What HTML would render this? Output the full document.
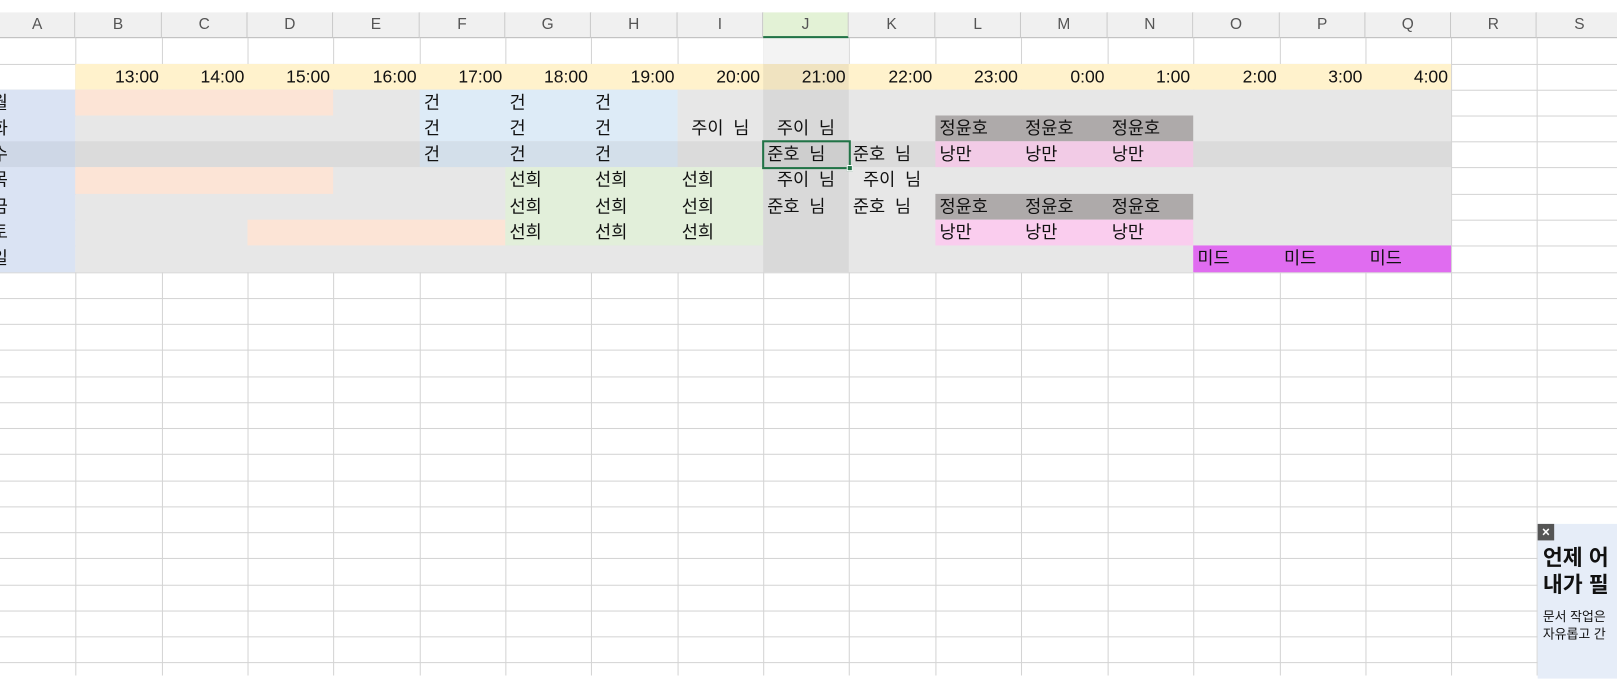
<!DOCTYPE html>
<html><head><meta charset="utf-8"><style>
*{margin:0;padding:0;box-sizing:border-box}
html,body{width:1617px;height:655px;overflow:hidden;background:#fff}
#w{position:absolute;left:0;top:0;width:1568px;height:636px;transform:scale(1.0313);transform-origin:0 0;font-family:"Liberation Sans","Noto Sans CJK KR",sans-serif;}
.a{position:absolute}
.vl{position:absolute;top:12px;width:1px;height:643px;background:#d4d4d4}
.hl{position:absolute;left:0;width:1617px;height:1px;background:#d4d4d4}
.hd{position:absolute;top:12px;height:25px;background:#f0f0f0;border-right:1px solid #c8c8c8;border-bottom:1px solid #bdbdbd;color:#555;font-size:15px;line-height:24px;text-align:center}
.t{position:absolute;font-size:17px;line-height:25px;color:#111;white-space:nowrap}
.r{text-align:right;padding-right:3px}
.c{text-align:center}
.l{padding-left:4px}
</style></head><body><div id="w">
<div class="hl" style="top:62px"></div>
<div class="hl" style="top:87px"></div>
<div class="hl" style="top:112px"></div><div class="hl" style="top:137px"></div><div class="hl" style="top:162px"></div><div class="hl" style="top:188px"></div><div class="hl" style="top:213px"></div><div class="hl" style="top:238px"></div><div class="hl" style="top:264px"></div>
<div class="hl" style="top:289px"></div><div class="hl" style="top:314px"></div><div class="hl" style="top:339px"></div><div class="hl" style="top:365px"></div><div class="hl" style="top:390px"></div><div class="hl" style="top:415px"></div><div class="hl" style="top:440px"></div><div class="hl" style="top:466px"></div><div class="hl" style="top:491px"></div><div class="hl" style="top:516px"></div><div class="hl" style="top:541px"></div><div class="hl" style="top:567px"></div><div class="hl" style="top:592px"></div><div class="hl" style="top:617px"></div><div class="hl" style="top:642px"></div>
<div class="vl" style="left:73px"></div><div class="vl" style="left:157px"></div><div class="vl" style="left:240px"></div><div class="vl" style="left:323px"></div><div class="vl" style="left:407px"></div><div class="vl" style="left:490px"></div><div class="vl" style="left:573px"></div><div class="vl" style="left:657px"></div><div class="vl" style="left:740px"></div><div class="vl" style="left:823px"></div><div class="vl" style="left:907px"></div><div class="vl" style="left:990px"></div><div class="vl" style="left:1074px"></div><div class="vl" style="left:1157px"></div><div class="vl" style="left:1241px"></div><div class="vl" style="left:1324px"></div><div class="vl" style="left:1407px"></div><div class="vl" style="left:1490px"></div><div class="vl" style="left:1574px"></div>
<div class="a" style="left:73px;top:62px;width:1334px;height:25px;background:#fff2cc"></div>
<div class="a" style="left:0;top:87px;width:73px;height:177px;background:#dae3f3"></div>
<div class="a" style="left:73px;top:87px;width:1334px;height:177px;background:#e7e7e7"></div>
<div class="a" style="left:0;top:137px;width:1407px;height:25px;background:rgba(0,0,0,0.05)"></div>
<div class="a" style="left:73px;top:87px;width:250px;height:25px;background:#fce4d6"></div>
<div class="a" style="left:73px;top:162px;width:250px;height:26px;background:#fce4d6"></div>
<div class="a" style="left:240px;top:213px;width:250px;height:25px;background:#fce4d6"></div>
<div class="a" style="left:407px;top:87px;width:250px;height:50px;background:#ddebf7"></div>
<div class="a" style="left:407px;top:137px;width:250px;height:25px;background:#d3dfea"></div>
<div class="a" style="left:490px;top:162px;width:250px;height:76px;background:#e2efda"></div>
<div class="a" style="left:907px;top:112px;width:250px;height:25px;background:#aeaaaa"></div>
<div class="a" style="left:907px;top:188px;width:250px;height:25px;background:#aeaaaa"></div>
<div class="a" style="left:907px;top:137px;width:250px;height:25px;background:#f2cbe6"></div>
<div class="a" style="left:907px;top:213px;width:250px;height:25px;background:#facdee"></div>
<div class="a" style="left:1157px;top:238px;width:250px;height:26px;background:#e06cf0"></div>
<div class="a" style="left:740px;top:37px;width:83px;height:25px;background:#f3f3f3"></div>
<div class="a" style="left:740px;top:62px;width:83px;height:202px;background:rgba(0,0,0,0.06)"></div>
<div class="hd" style="left:0;width:73px">A</div>
<div class="hd" style="left:73px;width:84px">B</div><div class="hd" style="left:157px;width:83px">C</div><div class="hd" style="left:240px;width:83px">D</div><div class="hd" style="left:323px;width:84px">E</div><div class="hd" style="left:407px;width:83px">F</div><div class="hd" style="left:490px;width:83px">G</div><div class="hd" style="left:573px;width:84px">H</div><div class="hd" style="left:657px;width:83px">I</div>
<div class="hd" style="left:740px;width:83px;background:#e3f2d6;border-bottom:2px solid #217346">J</div>
<div class="hd" style="left:823px;width:84px">K</div><div class="hd" style="left:907px;width:83px">L</div><div class="hd" style="left:990px;width:84px">M</div><div class="hd" style="left:1074px;width:83px">N</div><div class="hd" style="left:1157px;width:84px">O</div><div class="hd" style="left:1241px;width:83px">P</div><div class="hd" style="left:1324px;width:83px">Q</div><div class="hd" style="left:1407px;width:83px">R</div><div class="hd" style="left:1490px;width:84px">S</div><div class="hd" style="left:1574px;width:43px"></div>
<div class="t r" style="left:73px;top:62px;width:84px">13:00</div>
<div class="t r" style="left:157px;top:62px;width:83px">14:00</div>
<div class="t r" style="left:240px;top:62px;width:83px">15:00</div>
<div class="t r" style="left:323px;top:62px;width:84px">16:00</div>
<div class="t r" style="left:407px;top:62px;width:83px">17:00</div>
<div class="t r" style="left:490px;top:62px;width:83px">18:00</div>
<div class="t r" style="left:573px;top:62px;width:84px">19:00</div>
<div class="t r" style="left:657px;top:62px;width:83px">20:00</div>
<div class="t r" style="left:740px;top:62px;width:83px">21:00</div>
<div class="t r" style="left:823px;top:62px;width:84px">22:00</div>
<div class="t r" style="left:907px;top:62px;width:83px">23:00</div>
<div class="t r" style="left:990px;top:62px;width:84px">0:00</div>
<div class="t r" style="left:1074px;top:62px;width:83px">1:00</div>
<div class="t r" style="left:1157px;top:62px;width:84px">2:00</div>
<div class="t r" style="left:1241px;top:62px;width:83px">3:00</div>
<div class="t r" style="left:1324px;top:62px;width:83px">4:00</div>
<div class="t" style="left:-8px;top:87px">월</div>
<div class="t" style="left:-8px;top:112px">화</div>
<div class="t" style="left:-8px;top:137px">수</div>
<div class="t" style="left:-8px;top:162px">목</div>
<div class="t" style="left:-8px;top:188px">금</div>
<div class="t" style="left:-8px;top:213px">토</div>
<div class="t" style="left:-8px;top:238px">일</div>
<div class="t l" style="left:407px;top:87px">건</div><div class="t l" style="left:490px;top:87px">건</div><div class="t l" style="left:573px;top:87px">건</div>
<div class="t l" style="left:407px;top:112px">건</div><div class="t l" style="left:490px;top:112px">건</div><div class="t l" style="left:573px;top:112px">건</div>
<div class="t l" style="left:407px;top:137px">건</div><div class="t l" style="left:490px;top:137px">건</div><div class="t l" style="left:573px;top:137px">건</div>
<div class="t l" style="left:490px;top:162px">선희</div><div class="t l" style="left:573px;top:162px">선희</div><div class="t l" style="left:657px;top:162px">선희</div>
<div class="t l" style="left:490px;top:188px">선희</div><div class="t l" style="left:573px;top:188px">선희</div><div class="t l" style="left:657px;top:188px">선희</div>
<div class="t l" style="left:490px;top:213px">선희</div><div class="t l" style="left:573px;top:213px">선희</div><div class="t l" style="left:657px;top:213px">선희</div>
<div class="t c" style="left:657px;top:112px;width:83px">주이&nbsp; 님</div>
<div class="t c" style="left:740px;top:112px;width:83px">주이&nbsp; 님</div>
<div class="t l" style="left:740px;top:137px">준호&nbsp; 님</div>
<div class="t l" style="left:823px;top:137px">준호&nbsp; 님</div>
<div class="t c" style="left:740px;top:162px;width:83px">주이&nbsp; 님</div>
<div class="t c" style="left:823px;top:162px;width:84px">주이&nbsp; 님</div>
<div class="t l" style="left:740px;top:188px">준호&nbsp; 님</div>
<div class="t l" style="left:823px;top:188px">준호&nbsp; 님</div>
<div class="t l" style="left:907px;top:112px">정윤호</div><div class="t l" style="left:990px;top:112px">정윤호</div><div class="t l" style="left:1074px;top:112px">정윤호</div>
<div class="t l" style="left:907px;top:137px">낭만</div><div class="t l" style="left:990px;top:137px">낭만</div><div class="t l" style="left:1074px;top:137px">낭만</div>
<div class="t l" style="left:907px;top:188px">정윤호</div><div class="t l" style="left:990px;top:188px">정윤호</div><div class="t l" style="left:1074px;top:188px">정윤호</div>
<div class="t l" style="left:907px;top:213px">낭만</div><div class="t l" style="left:990px;top:213px">낭만</div><div class="t l" style="left:1074px;top:213px">낭만</div>
<div class="t l" style="left:1157px;top:238px">미드</div><div class="t l" style="left:1241px;top:238px">미드</div><div class="t l" style="left:1324px;top:238px">미드</div>
<div class="a" style="left:739px;top:136px;width:86px;height:28px;border:2px solid #217346"></div>
<div class="a" style="left:821px;top:160px;width:6px;height:6px;background:#217346;border:1px solid #fff"></div>
<div class="a" style="left:1491px;top:508px;width:130px;height:150px;background:#e6edf8"></div>
<div class="a" style="left:1491px;top:508px;width:16px;height:16px;background:#555;color:#fff;font-size:13px;line-height:16px;text-align:center;font-weight:bold">×</div>
<div class="t" style="left:1496px;top:529px;font-size:21px;font-weight:bold;line-height:26px;color:#111">언제 어</div>
<div class="t" style="left:1496px;top:555px;font-size:21px;font-weight:bold;line-height:26px;color:#111">내가 필</div>
<div class="t" style="left:1496px;top:590px;font-size:12.5px;line-height:17px">문서 작업은</div>
<div class="t" style="left:1496px;top:607px;font-size:12.5px;line-height:17px">자유롭고 간</div>
</div></body></html>
